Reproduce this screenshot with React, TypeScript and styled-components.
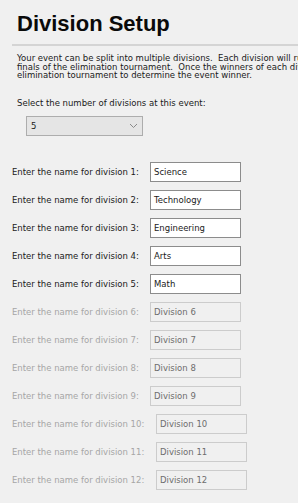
import styled, { createGlobalStyle } from 'styled-components'

const GlobalStyle = createGlobalStyle`
  html, body {
    margin: 0;
    padding: 0;
    background: #f0f0f0;
    overflow: hidden;
  }
`

const Page = styled.div`
  width: 298px;
  height: 503px;
  padding-left: 12px;
  box-sizing: border-box;
  font-family: "DejaVu Sans", Tahoma, sans-serif;
  font-size: 8.5px;
  color: #1a1a1a;
  overflow: hidden;
`

const Title = styled.h1`
  margin: 0;
  padding: 11px 0 0 5px;
  font-family: "Liberation Sans", Arial, sans-serif;
  font-size: 22px;
  font-weight: bold;
  line-height: 25px;
  color: #0a0a0a;
`

const Rule = styled.hr`
  margin: 8px 0 0 0;
  border: none;
  height: 2px;
  background: #d4d4d4;
`

const Intro = styled.p`
  margin: 8px 0 0 5px;
  line-height: 8.7px;
  white-space: nowrap;
`

const Prompt = styled.div`
  margin: 18px 0 0 5px;
  line-height: 10px;
`

const SelectBox = styled.div`
  margin: 8px 0 0 14px;
  width: 117px;
  height: 20px;
  box-sizing: border-box;
  border: 1px solid #adadad;
  background: #e5e5e5;
  display: flex;
  align-items: center;
  justify-content: space-between;
  padding: 0 4px 0 4px;
`

const Rows = styled.div`
  margin-top: 26px;
  display: flex;
  flex-direction: column;
  gap: 8px;
`

const Row = styled.div`
  display: flex;
  align-items: center;
  height: 20px;
`

const Label = styled.span<{ $wide?: boolean; $off?: boolean }>`
  width: ${p => (p.$wide ? 144 : 138)}px;
  flex: none;
  white-space: nowrap;
  color: ${p => (p.$off ? '#a6a6a6' : '#1a1a1a')};
`

const NameBox = styled.div<{ $off?: boolean }>`
  width: 91px;
  height: 20px;
  box-sizing: border-box;
  border: 1px solid ${p => (p.$off ? '#cccccc' : '#8c8c8c')};
  background: ${p => (p.$off ? '#f0f0f0' : '#ffffff')};
  color: ${p => (p.$off ? '#6d6d6d' : '#1a1a1a')};
  padding-left: 3px;
  line-height: 18px;
  white-space: nowrap;
`

const names = ['Science', 'Technology', 'Engineering', 'Arts', 'Math']

export default function App() {
  const rows = Array.from({ length: 12 }, (_, i) => i + 1)
  return (
    <>
      <GlobalStyle />
      <Page>
        <Title>Division Setup</Title>
        <Rule />
        <Intro>
          Your event can be split into multiple divisions.&nbsp; Each division will run through the semi-finals and
          <br />
          finals of the elimination tournament.&nbsp; Once the winners of each division are known, they enter a final
          <br />
          elimination tournament to determine the event winner.
        </Intro>
        <Prompt>Select the number of divisions at this event:</Prompt>
        <SelectBox>
          <span>5</span>
          <svg width="9" height="6" viewBox="0 0 9 6">
            <path d="M1 1 L4.5 4.5 L8 1" fill="none" stroke="#8a8a8a" strokeWidth="1" />
          </svg>
        </SelectBox>
        <Rows>
          {rows.map(n => {
            const off = n > names.length
            return (
              <Row key={n}>
                <Label $wide={n >= 10} $off={off}>
                  Enter the name for division {n}:
                </Label>
                <NameBox $off={off}>{off ? 'Division ' + n : names[n - 1]}</NameBox>
              </Row>
            )
          })}
        </Rows>
      </Page>
    </>
  )
}
